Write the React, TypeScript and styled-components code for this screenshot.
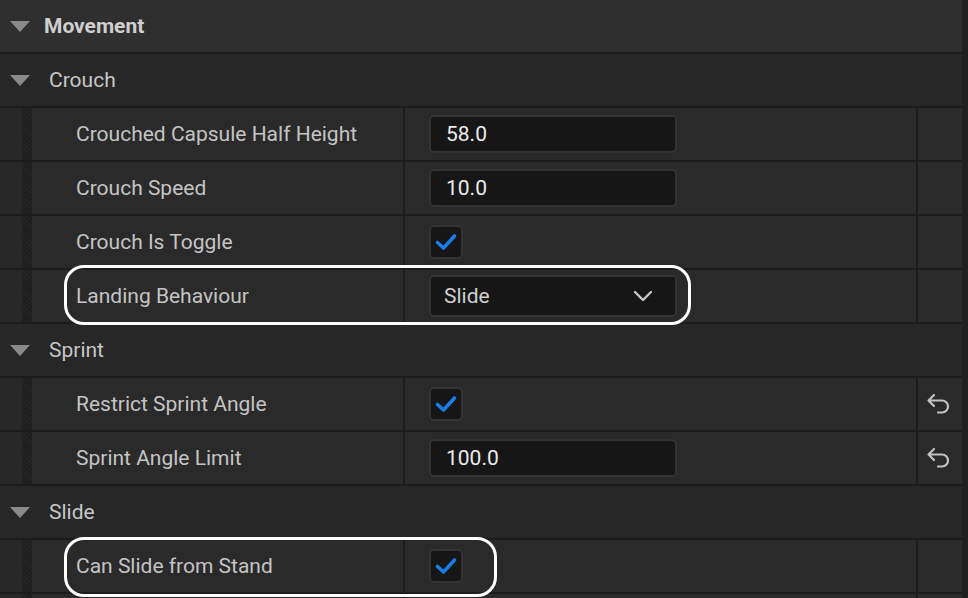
import React from "react";
import styled, { createGlobalStyle } from "styled-components";

const Global = createGlobalStyle`
  html, body { margin: 0; padding: 0; background: #1c1c1c; }
  body { font-family: Roboto, "Noto Sans", "Liberation Sans", sans-serif; }
  * { box-sizing: border-box; }
`;

const Panel = styled.div`
  position: relative;
  width: 968px;
  height: 598px;
  overflow: hidden;
  display: flex;
  background: #1c1c1c;
`;

const List = styled.div`
  flex: 1;
  display: flex;
  flex-direction: column;
  gap: 2px;
  background: #1c1c1c;
`;

const ScrollTrack = styled.div`
  width: 6px;
  background: #202020;
`;

const SectionHeader = styled.div`
  height: 52px;
  flex: none;
  display: flex;
  align-items: center;
  background: #2f2f2f;
  padding-left: 10px;
  gap: 14px;
  color: #cfcfcf;
  font-weight: 700;
  font-size: 21px;
`;

const CategoryRow = styled.div`
  height: 52px;
  flex: none;
  display: flex;
  align-items: center;
  background: #272727;
  padding-left: 10px;
  gap: 19px;
  color: #c6c6c6;
  font-size: 21px;
`;

const Triangle = styled.span`
  width: 0;
  height: 0;
  border-left: 10px solid transparent;
  border-right: 10px solid transparent;
  border-top: 11px solid #8a8a8a;
  margin-top: 1px;
`;

const PropRow = styled.div`
  height: 52px;
  flex: none;
  display: grid;
  grid-template-columns: 22px 10px 373px 513px 1fr;
  background: #1c1c1c;
`;

const Gutter = styled.div`
  background: #272727;
`;

const Stripe = styled.div`
  background-color: #1e1e1e;
  background-image: repeating-linear-gradient(
    45deg,
    rgba(255, 255, 255, 0.03) 0 1px,
    transparent 1px 3px
  );
`;

const NameCell = styled.div`
  background: #2a2a2a;
  display: flex;
  align-items: center;
  padding-left: 44px;
  margin-right: 2px;
  color: #c4c4c4;
  font-size: 21px;
  padding-bottom: 1px;
`;

const ValueCell = styled.div`
  background: #2a2a2a;
  display: flex;
  align-items: center;
  padding-left: 24px;
  margin-right: 2px;
`;

const ResetCell = styled.div`
  background: #2a2a2a;
  display: flex;
  align-items: center;
  justify-content: center;
  color: #c2c2c2;
  padding-right: 2px;
`;

const NumberBox = styled.div`
  width: 248px;
  height: 38px;
  margin-top: -1px;
  border-radius: 5px;
  background: #161616;
  border: 2px solid #333333;
  display: flex;
  align-items: center;
  padding-left: 15px;
  color: #ececec;
  font-size: 21px;
`;

const Dropdown = styled(NumberBox)`
  height: 42px;
  margin-top: 0;
  color: #cfcfcf;
  justify-content: space-between;
  padding-right: 22px;
  padding-left: 13px;
`;

const CheckBox = styled.div`
  width: 34px;
  height: 34px;
  border-radius: 5px;
  background: #161616;
  border: 2px solid #333333;
  display: flex;
  align-items: center;
  justify-content: center;
`;

const Ring = styled.div<{ $top: number; $left: number; $w: number; $h: number }>`
  position: absolute;
  top: ${(p) => p.$top}px;
  left: ${(p) => p.$left}px;
  width: ${(p) => p.$w}px;
  height: ${(p) => p.$h}px;
  border: 3px solid #ffffff;
  border-radius: 20px;
  pointer-events: none;
`;

const Check = () => (
  <svg width="24" height="20" viewBox="0 0 24 20">
    <path
      d="M3.5 10.5 L9.5 16 L20.5 4"
      fill="none"
      stroke="#1b7ce6"
      strokeWidth="3.6"
      strokeLinecap="round"
      strokeLinejoin="round"
    />
  </svg>
);

const Chevron = () => (
  <svg width="20" height="12" viewBox="0 0 20 12">
    <path
      d="M2 2 L10 10 L18 2"
      fill="none"
      stroke="#c8c8c8"
      strokeWidth="2.4"
      strokeLinecap="round"
      strokeLinejoin="round"
    />
  </svg>
);

const ResetArrow = () => (
  <svg width="26" height="22" viewBox="0 0 26 22">
    <path
      d="M8 2 L2.5 7.5 L8 13 M2.5 7.5 H16 a6 6 0 0 1 0 12 H12"
      fill="none"
      stroke="#c4c4c4"
      strokeWidth="2.2"
      strokeLinecap="round"
      strokeLinejoin="round"
    />
  </svg>
);

type Prop = {
  name: string;
  kind: "number" | "check" | "dropdown" | "none";
  value?: string;
  reset?: boolean;
};

const Property = ({ p }: { p: Prop }) => (
  <PropRow>
    <Gutter />
    <Stripe />
    <NameCell>{p.name}</NameCell>
    <ValueCell>
      {p.kind === "number" && <NumberBox>{p.value}</NumberBox>}
      {p.kind === "check" && (
        <CheckBox>
          <Check />
        </CheckBox>
      )}
      {p.kind === "dropdown" && (
        <Dropdown>
          <span>{p.value}</span>
          <Chevron />
        </Dropdown>
      )}
    </ValueCell>
    <ResetCell>{p.reset && <ResetArrow />}</ResetCell>
  </PropRow>
);

const sections: { title: string; props: Prop[] }[] = [
  {
    title: "Crouch",
    props: [
      { name: "Crouched Capsule Half Height", kind: "number", value: "58.0" },
      { name: "Crouch Speed", kind: "number", value: "10.0" },
      { name: "Crouch Is Toggle", kind: "check" },
      { name: "Landing Behaviour", kind: "dropdown", value: "Slide" },
    ],
  },
  {
    title: "Sprint",
    props: [
      { name: "Restrict Sprint Angle", kind: "check", reset: true },
      { name: "Sprint Angle Limit", kind: "number", value: "100.0", reset: true },
    ],
  },
  {
    title: "Slide",
    props: [
      { name: "Can Slide from Stand", kind: "check" },
      { name: "", kind: "none" },
    ],
  },
];

export default function App() {
  return (
    <>
      <Global />
      <Panel>
        <List>
          <SectionHeader>
            <Triangle />
            <span>Movement</span>
          </SectionHeader>
          {sections.map((s) => (
            <React.Fragment key={s.title}>
              <CategoryRow>
                <Triangle />
                <span>{s.title}</span>
              </CategoryRow>
              {s.props.map((p, i) => (
                <Property key={p.name + i} p={p} />
              ))}
            </React.Fragment>
          ))}
        </List>
        <ScrollTrack />
        <Ring $top={265} $left={64} $w={627} $h={60} />
        <Ring $top={537} $left={64} $w={433} $h={60} />
      </Panel>
    </>
  );
}
